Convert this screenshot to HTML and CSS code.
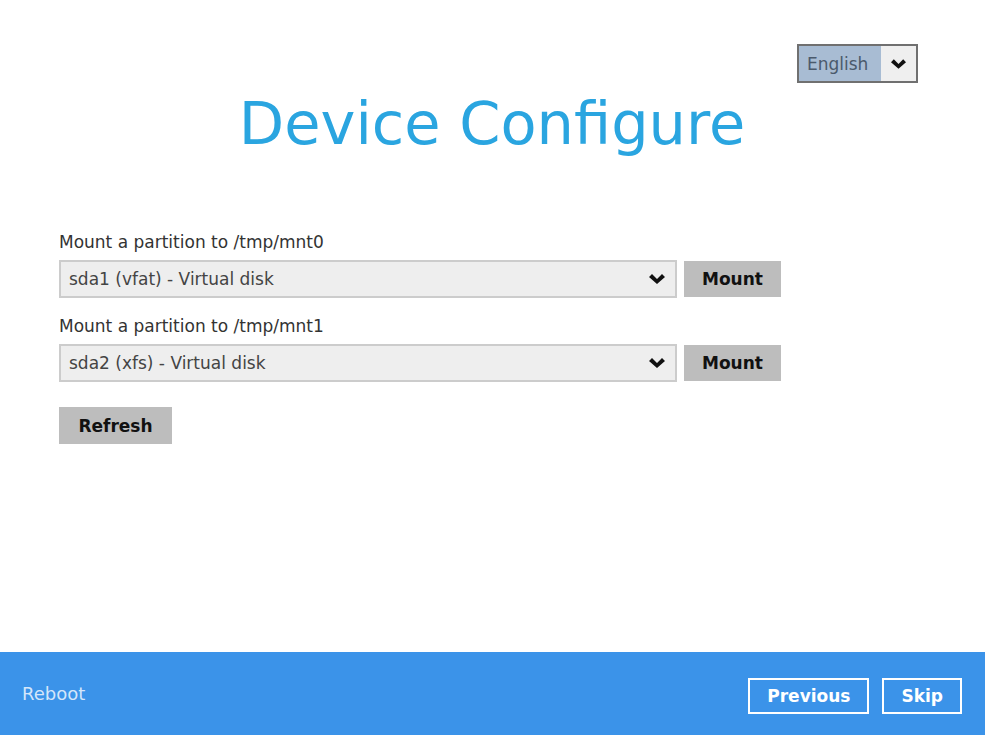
FILE: index.html
```html
<!DOCTYPE html>
<html lang="en">
<head>
    <meta charset="UTF-8">
    <title>Device Configure</title>
    <link rel="stylesheet" href="styles.css">
</head>
<body>
    <div class="page">
        <div class="main">
            <div class="lang-row">
                <div class="lang-select">
                    <span class="lang-value">English</span>
                    <span class="lang-arrow">
                        <svg width="15" height="10" viewBox="0 0 16 10"><path d="M0 3 L3 0 L8 5 L13 0 L16 3 L8 10 Z" fill="#111"/></svg>
                    </span>
                </div>
            </div>
            <h1 class="title">Device Configure</h1>

            <div class="form">
                <div class="field">
                    <label class="field-label">Mount a partition to /tmp/mnt0</label>
                    <div class="field-row">
                        <div class="select">
                            <span>sda1 (vfat) - Virtual disk</span>
                            <svg width="16" height="10" viewBox="0 0 16 10"><path d="M0 3 L3 0 L8 5 L13 0 L16 3 L8 10 Z" fill="#111"/></svg>
                        </div>
                        <button class="button">Mount</button>
                    </div>
                </div>
                <div class="field">
                    <label class="field-label">Mount a partition to /tmp/mnt1</label>
                    <div class="field-row">
                        <div class="select">
                            <span>sda2 (xfs) - Virtual disk</span>
                            <svg width="16" height="10" viewBox="0 0 16 10"><path d="M0 3 L3 0 L8 5 L13 0 L16 3 L8 10 Z" fill="#111"/></svg>
                        </div>
                        <button class="button">Mount</button>
                    </div>
                </div>
                <button class="button button-refresh">Refresh</button>
            </div>
        </div>

        <div class="footer">
            <span class="footer-link">Reboot</span>
            <div class="footer-buttons">
                <button class="footer-button">Previous</button>
                <button class="footer-button">Skip</button>
            </div>
        </div>
    </div>
</body>
</html>
```

FILE: styles.css
```css
body {
    margin: 0;
    font-family: "DejaVu Sans", Verdana, sans-serif;
    background-color: #ffffff;
}

.page {
    height: 735px;
    display: flex;
    flex-direction: column;
}

.main {
    flex: 1;
    padding: 44px 67px 0 59px;
}

.lang-row {
    display: flex;
    justify-content: flex-end;
}

.lang-select {
    display: flex;
    width: 117px;
    height: 35px;
    border: 2px solid #707070;
}

.lang-value {
    flex: 1;
    display: flex;
    align-items: center;
    padding-left: 8px;
    background-color: #a8bcd3;
    color: #4b5a6c;
    font-size: 17px;
}

.lang-arrow {
    width: 35px;
    display: flex;
    align-items: center;
    justify-content: center;
    background-color: #efefef;
}

.title {
    margin: 6px 0 0;
    padding-left: 7px;
    text-align: center;
    color: #2aa5e0;
    font-size: 59px;
    font-weight: normal;
    line-height: 70px;
}

.form {
    margin-top: 73px;
}

.field {
    margin-bottom: 18px;
}

.field-label {
    display: block;
    color: #333333;
    font-size: 17px;
    line-height: 20px;
    margin-bottom: 8px;
}

.field-row {
    display: flex;
    align-items: center;
    gap: 7px;
}

.select {
    display: flex;
    align-items: center;
    justify-content: space-between;
    box-sizing: border-box;
    width: 618px;
    height: 38px;
    padding: 0 10px 0 8px;
    border: 2px solid #cccccc;
    background-color: #eeeeee;
    color: #444444;
    font-size: 17px;
}

.button {
    height: 36px;
    padding: 0 18px;
    border: none;
    background-color: #bdbdbd;
    color: #111111;
    font-family: "DejaVu Sans", Verdana, sans-serif;
    font-size: 17px;
    font-weight: bold;
}

.button-refresh {
    width: 113px;
    height: 37px;
    margin-top: 7px;
    padding: 0;
}

.footer {
    height: 83px;
    display: flex;
    align-items: center;
    justify-content: space-between;
    padding: 0 23px 0 22px;
    background-color: #3b93e9;
}

.footer-link {
    color: #d4e6fa;
    font-size: 18px;
    margin-top: -1px;
}

.footer-buttons {
    display: flex;
    gap: 13px;
    margin-top: 5px;
}

.footer-button {
    height: 36px;
    padding: 0 17px;
    border: 2px solid #ffffff;
    background-color: transparent;
    color: #ffffff;
    font-family: "DejaVu Sans", Verdana, sans-serif;
    font-size: 17px;
    font-weight: bold;
}
```
